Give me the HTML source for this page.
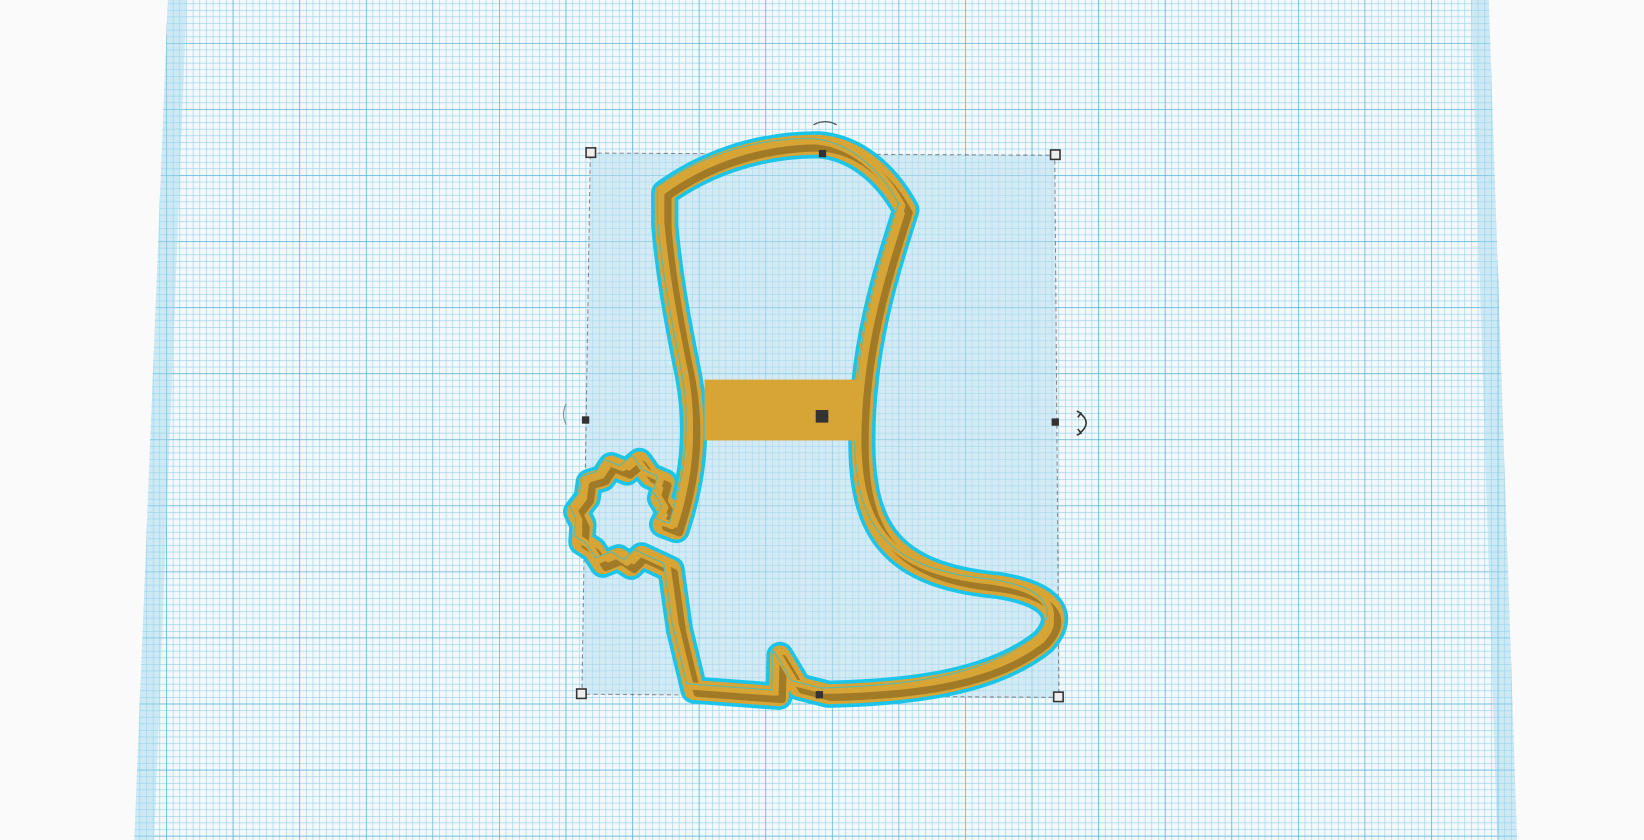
<!DOCTYPE html>
<html><head><meta charset="utf-8"><style>
html,body{margin:0;padding:0;background:#fafafa;width:1644px;height:840px;overflow:hidden}
svg{display:block}
</style></head><body>
<svg width="1644" height="840" viewBox="0 0 1568 801" preserveAspectRatio="none" xmlns="http://www.w3.org/2000/svg">
<defs>
<pattern id="minor" x="222" y="41" width="6.35" height="6.3" patternUnits="userSpaceOnUse">
<path d="M0 0V6.3M0 0H6.35" stroke="#8fd0ec" stroke-width="1.1" fill="none"/>
</pattern>
<pattern id="major" x="222" y="41" width="63.5" height="63" patternUnits="userSpaceOnUse">
<path d="M0 0V63M0 0H63.5" stroke="#4fb0d8" stroke-width="1.2" fill="none"/>
</pattern>
<clipPath id="plate"><polygon points="160,0 1420,0 1447,801 128,801"/></clipPath>
<path id="boot" d="M634,184 C670,158 720,138 780,138 C815,140 845,165 864,200 C845,260 822,330 822,420 C822,500 845,548 950,558 C1000,565 1020,585 995,612 C950,648 880,660 790,662 L762,655 L744,625 L743,664 L662,658 L648,600 L640,543 L612,530 L602,540 L590,532 L575,538 L566,524 L555,517 L556,500 L550,488 L560,475 L562,460 L575,456 L583,444 L598,450 L610,440 L620,454 L634,460 L630,475 L638,488 L632,500 L645,505 C660,460 668,410 655,350 C645,300 638,260 634,215 Z"/>
</defs>
<g clip-path="url(#plate)">
<rect width="1568" height="801" fill="#f3f8fa"/>
<rect width="1568" height="801" fill="url(#minor)"/>
<rect width="1568" height="801" fill="url(#major)"/>
<polygon points="160,0 178,0 147,801 128,801" fill="#9fd8ee" opacity="0.45"/>
<polygon points="1403,0 1420,0 1447,801 1428,801" fill="#9fd8ee" opacity="0.45"/>
</g>
<polygon points="563,146 1006,148 1010,665 555,662" fill="#b9e0f0" opacity="0.55" stroke="#333" stroke-width="1" stroke-dasharray="4,3"/>
<g fill="none" stroke-linejoin="round" stroke-linecap="round">
<use href="#boot" stroke="#1cc4ea" stroke-width="26"/>
<use href="#boot" stroke="#d7a535" stroke-width="19"/>
<use href="#boot" stroke="#8a6822" stroke-width="7" transform="translate(3,3)" opacity="0.7"/>
<use href="#boot" stroke="#d7a535" stroke-width="7" transform="translate(-4,-4)"/>
<use href="#boot" stroke="#1cc4ea" stroke-width="1.2" transform="translate(-7,-6)" opacity="0.6"/>
</g>
<rect x="672" y="362" width="148" height="58" fill="#d7a535"/>
<rect x="778" y="391" width="12" height="12" fill="#333"/>
<g fill="#eee" stroke="#333" stroke-width="1.5">
<rect x="559" y="141" width="9" height="9"/><rect x="1002" y="143" width="9" height="9"/>
<rect x="1005" y="660" width="9" height="9"/><rect x="550" y="657" width="9" height="9"/>
</g>
<g fill="#333">
<rect x="781" y="143" width="7" height="7"/><rect x="555" y="397" width="7" height="7"/>
<rect x="1003" y="399" width="7" height="7"/><rect x="778" y="659" width="7" height="7"/>
</g>
<path d="M776,119 Q787,113 798,119" stroke="#555" fill="none" stroke-width="1.2"/>
<path d="M540,385 Q535,395 540,405" stroke="#888" fill="none" stroke-width="1"/>
<path d="M1030,394 Q1042,403 1030,413" stroke="#333" fill="none" stroke-width="1.5"/>
<path d="M1027,392 L1031,394 L1028,398 M1027,415 L1031,413 L1028,409" stroke="#333" fill="none" stroke-width="1.5"/>
</svg>
</body></html>
